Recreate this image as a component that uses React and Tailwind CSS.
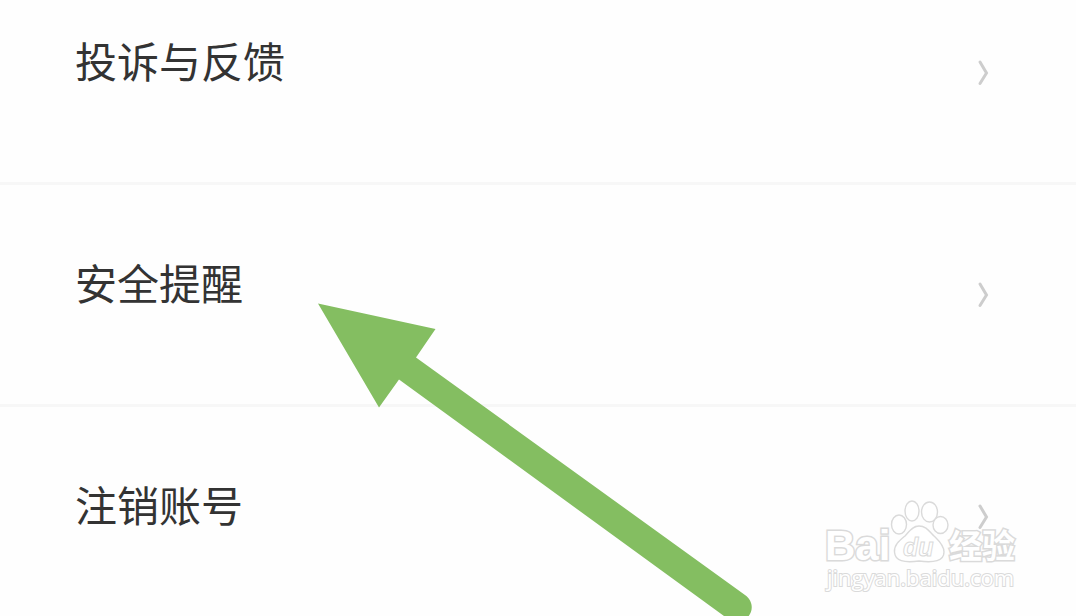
const rows = ["投诉与反馈", "安全提醒", "注销账号"];

function Chevron() {
  return (
    <svg className="h-7 w-3 shrink-0" viewBox="0 0 12 28" fill="none" aria-hidden="true">
      <path d="M3 3 L9.500 14 L3 24.500" stroke="#cdcdcd" strokeWidth="3" strokeLinecap="round" />
    </svg>
  );
}

function Pointer() {
  return (
    <svg
      className="pointer-events-none absolute top-[303px] left-[318px]"
      width="440"
      height="320"
      viewBox="318 303 440 320"
      aria-hidden="true"
    >
      <path
        d="M318 303.5 L435.5 329 L416 357.5 L745 595 C756 603 752 616 744 620 C738 623 732 622 724 616 L399 379.5 L379 407.5 Z"
        fill="#84be61"
      />
    </svg>
  );
}

function Watermark() {
  return (
    <svg
      className="pointer-events-none absolute top-[490px] right-[46px]"
      width="220"
      height="110"
      viewBox="0 0 220 110"
      fill="#ffffff"
      stroke="#dadada"
      strokeWidth="1.4"
      aria-hidden="true"
    >
      <g fontFamily="'Liberation Sans', 'Noto Sans CJK SC', sans-serif" fontWeight="700" paintOrder="stroke">
        <text x="15" y="70" fontSize="42" strokeWidth="3">Bai</text>
        <text x="139" y="68" fontSize="33" strokeWidth="3" fontFamily="'Noto Sans CJK SC', sans-serif">经验</text>
        <text x="17" y="96" fontSize="22" fontWeight="500" strokeWidth="2" fontFamily="'Open Sans', sans-serif">
          jingyan.baidu.com
        </text>
      </g>
      <ellipse cx="89" cy="34.500" rx="7.500" ry="9.500" />
      <ellipse cx="102" cy="21" rx="7" ry="10" />
      <ellipse cx="119.500" cy="22" rx="8" ry="10" />
      <ellipse cx="130.500" cy="35" rx="7.500" ry="8.500" />
      <path d="M109 36 C102 36 99 42 95 46 C89 51 84 55 84.500 62 C85 71 94 73 109 71 C124 73 134 71 134 62 C134 55 128 50 124 46 C119 41 116 36 109 36 Z" />
      <text x="93" y="66" fontSize="25" fontFamily="'Liberation Sans', sans-serif" fontStyle="italic" fontWeight="700" strokeWidth="1">
        du
      </text>
    </svg>
  );
}

export default function App() {
  return (
    <main className="relative h-screen overflow-hidden bg-[#fefefe] font-['Noto_Sans_CJK_SC',sans-serif] text-[#333333]">
      <ul className="-mt-[37px]">
        {rows.map((label) => (
          <li key={label} className="border-b-3 border-[#f7f7f7]">
            <button
              type="button"
              className="flex w-full items-center justify-between py-[68px] pr-[87px] pl-[75px] text-left"
            >
              <span className="pb-[26px] text-[42px] leading-[57px]">{label}</span>
              <Chevron />
            </button>
          </li>
        ))}
      </ul>
      <Pointer />
      <Watermark />
    </main>
  );
}
